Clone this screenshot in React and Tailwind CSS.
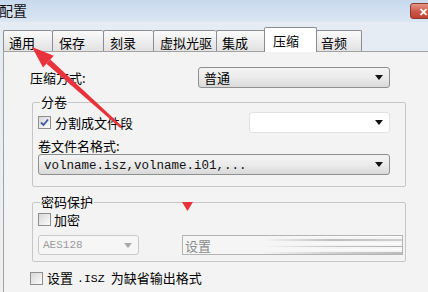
import React from "react"

const Arrow = ({ gray }) => (
  <svg width="8" height="5" viewBox="0 0 8 5" className="shrink-0">
    <path d="M0 0 H8 L4 5 Z" fill={gray ? "#a8a8a8" : "#111"} />
  </svg>
)

const CheckBox = ({ checked }) => (
  <div className="w-[13px] h-[13px] shrink-0 border border-[#8e8f8f] bg-gradient-to-br from-[#d8d8d8] to-[#fbfbfb] flex items-center justify-center">
    {checked && (
      <svg width="9" height="9" viewBox="0 0 9 9">
        <path d="M1 4.5 L3.5 7 L8 1.5" fill="none" stroke="#3b57a3" strokeWidth="1.8" />
      </svg>
    )}
  </div>
)

const Select = ({ className, children, white }) => (
  <div
    className={`h-[21px] flex items-center justify-between pl-[5px] pr-[6px] rounded-[3px] border ${
      white
        ? "border-[#e2e2e2] bg-white"
        : "border-[#8e8f8f] bg-gradient-to-b from-[#f3f3f3] via-[#ebebeb] to-[#d9d9d9]"
    } ${className}`}
  >
    <div>{children}</div>
    <Arrow />
  </div>
)

const tabs = [
  { name: "通用", w: "w-[49px]", pl: "pl-[5px]" },
  { name: "保存", w: "w-[51px]", pl: "pl-[6px]" },
  { name: "刻录", w: "w-[50px]", pl: "pl-[6px]" },
  { name: "虚拟光驱", w: "w-[63px]", pl: "pl-[6px]" },
  { name: "集成", w: "w-[49px]", pl: "pl-[5px]" },
  { name: "压缩", w: "w-[53px]", pl: "pl-[8px]", active: true },
  { name: "音频", w: "w-[46px]", pl: "pl-[4px]" },
]

export default function App() {
  return (
    <div
      className="relative w-[428px] h-[292px] overflow-hidden bg-gradient-to-b from-[#e4ebf4] to-[#f0f0f0] text-[13px] text-black leading-none"
      style={{ fontFamily: '"Noto Sans CJK SC", "Noto Sans", sans-serif' }}
    >
      {/* title bar */}
      <div className="h-[22px] flex items-start bg-gradient-to-b from-[#c8d9ee] to-[#dbe6f3]">
        <div className="mt-[3px] -ml-[1px] text-[14px] text-[#111]">配置</div>
        <div className="ml-auto mt-[3px] -mr-[8px] w-[26px] h-[16px] rounded-l-[3px] border border-[#8d3a2e] bg-gradient-to-b from-[#e3978a] via-[#cf5a48] to-[#c0402d] flex items-center justify-center">
          <span className="text-white text-[11px] font-bold">✕</span>
        </div>
      </div>

      {/* tabs */}
      <div className="mt-[6px] ml-[3px] h-[23px] flex items-end">
        {tabs.map((t) =>
          t.active ? (
            <div
              key={t.name}
              className={`${t.w} ${t.pl} relative z-10 h-[25px] -mb-[1px] -mx-[1px] pt-[6px] bg-white border border-b-0 border-[#8a8d96] rounded-t-[2px]`}
            >
              {t.name}
            </div>
          ) : (
            <div
              key={t.name}
              className={`${t.w} ${t.pl} h-[21px] pt-[5px] border border-b-0 border-r-0 last:border-r border-[#8a8d96] bg-gradient-to-b from-[#fafafa] to-[#e2e2e2] rounded-t-[2px]`}
            >
              {t.name}
            </div>
          )
        )}
      </div>

      {/* panel */}
      <div className="ml-[3px] h-[260px] border-l border-t border-[#a2a2a2] bg-[#f3f3f3] pl-[26px] pr-[22px]">
        <div className="mt-[15px] mr-[16px] h-[21px] flex items-center">
          <span>压缩方式:</span>
          <Select className="ml-auto w-[192px]">普通</Select>
        </div>

        <fieldset className="mt-[6px] ml-[2px] border border-[#c6c6c6] rounded-[2px] pl-[5px] pr-[15px] pb-[11px]">
          <legend className="ml-[2px] px-[1px] h-[16px] leading-[16px]">分卷</legend>
          <div className="mt-[2px] h-[20px] flex items-center">
            <CheckBox checked />
            <span className="ml-[4px]">分割成文件段</span>
            <Select white className="ml-auto w-[141px] h-[20px]" />
          </div>
          <div className="mt-[6px] h-[16px] leading-[16px]">卷文件名格式:</div>
          <Select className="w-full">
            <span className="text-[12.5px] text-[#111]" style={{ fontFamily: '"Liberation Mono", monospace' }}>
              volname.isz,volname.i01,...
            </span>
          </Select>
        </fieldset>

        <fieldset className="mt-[7px] ml-[2px] border border-[#c6c6c6] rounded-[2px] pl-[5px] pr-[2px] pb-[6px]">
          <legend className="ml-[2px] px-[1px] h-[16px] leading-[16px]">密码保护</legend>
          <div className="mt-[1px] h-[16px] flex items-center">
            <CheckBox />
            <span className="ml-[3px]">加密</span>
          </div>
          <div className="mt-[8px] h-[20px] flex items-center">
            <div className="w-[101px] h-[20px] rounded-[3px] border border-[#c9c9c9] bg-[#f6f6f6] flex items-center justify-between pl-[4px] pr-[6px]">
              <span className="text-[11px] text-[#9a9a9a]" style={{ fontFamily: '"Liberation Mono", monospace' }}>AES128</span>
              <Arrow gray />
            </div>
            <div className="relative ml-[43px] flex-1 h-[20px] border border-[#b4b4b4] bg-[#f5f5f5] overflow-hidden flex items-center pl-[2px]">
              <div className="absolute inset-0 flex flex-col justify-center gap-[2px] pl-[80px]">
                <div className="h-[1px] bg-gradient-to-r from-transparent to-white" />
                <div className="h-[2px] bg-gradient-to-r from-transparent via-[#bdbdbd] to-[#d0d0d0]" />
                <div className="h-[1px] bg-gradient-to-r from-transparent to-white" />
                <div className="h-[2px] bg-gradient-to-r from-transparent via-[#c4c4c4] to-[#b0b0b0]" />
                <div className="h-[1px] bg-gradient-to-r from-transparent to-white" />
                <div className="h-[2px] bg-gradient-to-r from-transparent via-[#d0d0d0] to-[#bcbcbc]" />
              </div>
              <span className="relative text-[#8c8c8c]">设置</span>
            </div>
          </div>
        </fieldset>

        <div className="mt-[8px] h-[16px] flex items-center leading-[16px]">
          <CheckBox />
          <span className="ml-[4px]">设置</span>
          <span className="ml-[4px] pt-[2px] text-[11.5px] leading-[14px]" style={{ fontFamily: '"Liberation Mono", monospace' }}>.ISZ</span>
          <span className="ml-[6px]">为缺省输出格式</span>
        </div>
      </div>

      {/* annotations */}
      <svg className="absolute left-0 top-0 pointer-events-none" width="428" height="292">
        <polygon points="32,47 53.8,55.8 43,67.6" fill="#e8323c" />
        <polygon points="46.5,63.8 50.3,59.6 121.8,126.1 120.2,127.9" fill="#e8323c" />
        <polygon points="182,202 193,202 187.5,211" fill="#e8323c" />
      </svg>
    </div>
  )
}
